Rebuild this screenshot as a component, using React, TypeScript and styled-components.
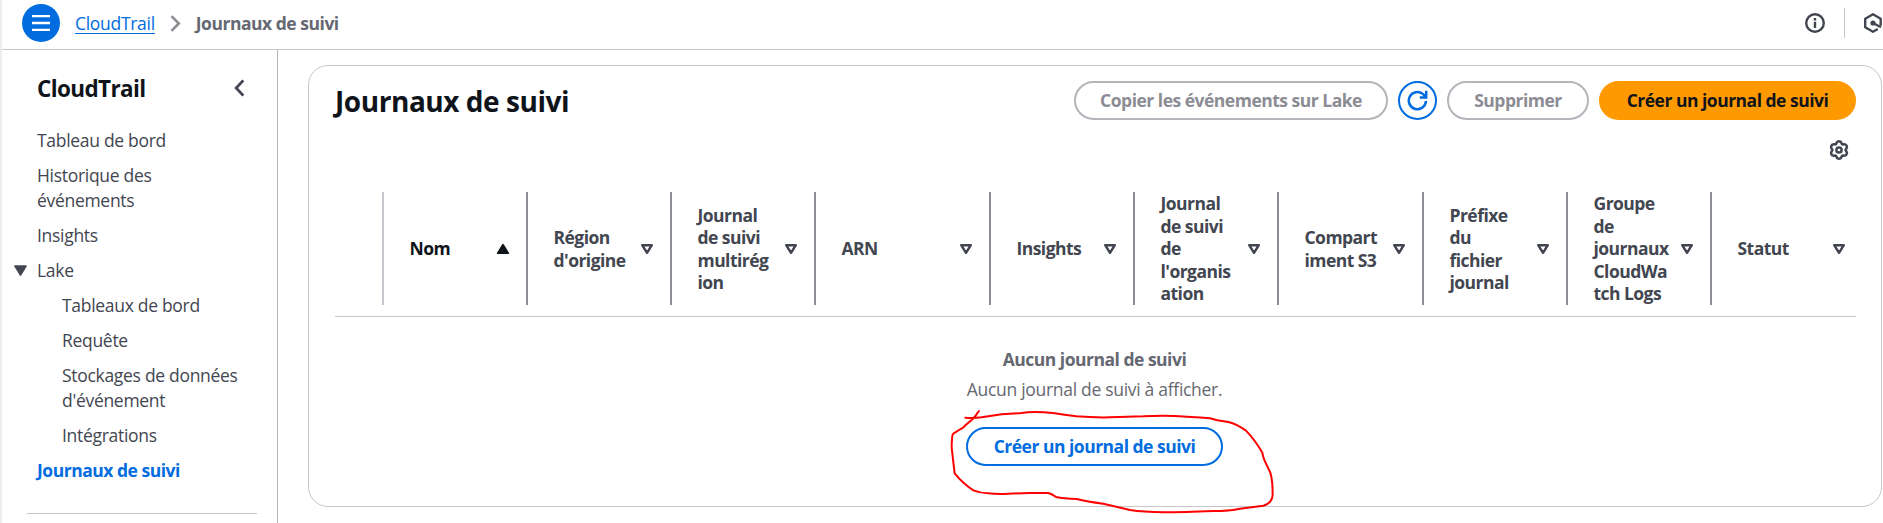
import React from 'react';
import styled, { createGlobalStyle } from 'styled-components';

const GlobalStyle = createGlobalStyle`
  *, *::before, *::after { box-sizing: border-box; }
  body {
    margin: 0;
    background: #fff;
    overflow: hidden;
    color: #424650;
    font: 400 17.5px/25px "Open Sans", "Noto Sans", sans-serif;
    letter-spacing: -0.3px;
  }
`;

const Page = styled.div`
  position: relative;
  display: flex;
  flex-direction: column;
  height: 523px;
  border-left: 2px solid #ebebf0;
  overflow: hidden;
`;

const TopBar = styled.header`
  flex: none;
  display: flex;
  align-items: center;
  justify-content: space-between;
  height: 50px;
  padding: 0 0 3px 20px;
  border-bottom: 1px solid #c6c6cd;
`;

const Breadcrumbs = styled.nav`
  display: flex;
  align-items: center;
`;

const MenuButton = styled.button`
  display: grid;
  place-items: center;
  width: 38px;
  height: 38px;
  margin-right: 15px;
  padding: 0;
  border: 0;
  border-radius: 50%;
  background: #006ce0;
`;

const CrumbLink = styled.a`
  height: 21px;
  line-height: 20px;
  border-bottom: 1px solid #006ce0;
  color: #006ce0;
`;

const CrumbArrow = styled.svg`
  margin: 0 15px;
`;

const CrumbCurrent = styled.span`
  color: #656871;
  font-weight: 700;
  letter-spacing: -0.48px;
`;

const Tools = styled.div`
  display: flex;
  align-items: center;
  width: 78px;
  height: 30px;
`;

const ToolDivider = styled.span`
  flex: none;
  width: 1px;
  height: 30px;
  margin: 0 19px;
  background: #c6c6cd;
`;

const Icon = styled.svg`
  display: block;
  flex: none;
`;

const Body = styled.div`
  flex: 1;
  display: flex;
  min-height: 0;
`;

const Sidebar = styled.aside`
  flex: none;
  width: 276px;
  border-right: 1px solid #b4b4bb;
  padding: 25px 20px 0 25px;
`;

const SideHeader = styled.div`
  display: flex;
  align-items: center;
  justify-content: space-between;
  height: 26px;
  padding: 0 12px 0 10px;
`;

const SideTitle = styled.h2`
  margin: 0;
  color: #0f141a;
  font-size: 22.5px;
  font-weight: 700;
  letter-spacing: -0.62px;
`;

const NavList = styled.ul<{ $nested?: boolean }>`
  display: flex;
  flex-direction: column;
  gap: 10px;
  margin: ${(p) => (p.$nested ? '10px 0 0 25px' : '27px 0 0 10px')};
  padding: 0;
  list-style: none;
`;

const NavItem = styled.li<{ $active?: boolean }>`
  white-space: pre-line;
  ${(p) => p.$active && 'color: #006ce0; font-weight: 700; letter-spacing: -0.48px;'}
`;

const NavGroup = styled.div`
  display: flex;
  align-items: center;
  gap: 10px;
  margin-left: -23px;
`;

const SideRule = styled.hr`
  height: 1px;
  margin: 30px 0 0;
  border: 0;
  background: #c6c6cd;
`;

const Main = styled.main`
  flex: 1;
  min-width: 0;
  padding: 15px 1px 16px 30px;
`;

const Panel = styled.section`
  height: 442px;
  padding: 15px 25px 0 26px;
  border: 1px solid #c6c6cd;
  border-radius: 20px;
`;

const PanelHeader = styled.div`
  display: flex;
  align-items: center;
  justify-content: space-between;
  height: 39px;
`;

const PanelTitle = styled.h1`
  margin: 0;
  color: #0f141a;
  font-size: 28px;
  font-weight: 700;
  line-height: 36px;
  letter-spacing: -0.45px;
`;

const Actions = styled.div`
  display: flex;
  gap: 10px;
`;

const tones = {
  normal: 'color: #006ce0; border-color: #006ce0; background: #fff;',
  disabled: 'color: #8c8c94; border-color: #b4b4bb; background: #fff;',
  primary: 'color: #0f141a; border-color: #ff9900; background: #ff9900;',
};

const Button = styled.button<{ $tone: keyof typeof tones; $width: number }>`
  display: flex;
  align-items: center;
  justify-content: center;
  width: ${(p) => p.$width}px;
  height: 39px;
  padding: 0;
  border: 2px solid;
  border-radius: 20px;
  font: inherit;
  font-weight: 700;
  letter-spacing: -0.5px;
  white-space: nowrap;
  ${(p) => tones[p.$tone]}
`;

const Preferences = styled.div`
  display: flex;
  justify-content: flex-end;
  height: 39px;
  margin-top: 10px;
  padding: 10px 7px 0 0;
`;

const HeaderRow = styled.div`
  display: flex;
  height: 148px;
  padding: 23px 0 11px 47px;
  border-bottom: 1px solid #c6c6cd;
`;

const HeaderCell = styled.div<{ $width: number; $sorted?: boolean; $first?: boolean; $last?: boolean }>`
  flex: ${(p) => (p.$last ? '1 1 0' : `0 0 ${p.$width}px`)};
  display: flex;
  align-items: center;
  justify-content: space-between;
  padding: 0 ${(p) => (p.$last ? 10 : 16)}px 0 25.5px;
  border-left: 2px solid ${(p) => (p.$first ? '#c6c6cd' : '#8c8c94')};
  color: ${(p) => (p.$sorted ? '#0f141a' : '#424650')};
  font-weight: 700;
  line-height: 22.5px;
  letter-spacing: -0.54px;
  white-space: pre;
`;

const Empty = styled.div`
  display: flex;
  flex-direction: column;
  align-items: center;
  margin-left: -2px;
  padding-top: 30px;
  color: #656871;
  line-height: 25px;
`;

const EmptyTitle = styled.strong`
  letter-spacing: -0.5px;
`;

const EmptyText = styled.p`
  margin: 5px 0 25px;
`;

const Scribble = styled.svg`
  position: absolute;
  left: 928px;
  top: 330px;
  pointer-events: none;
`;

const columns = [
  { label: 'Nom', width: 144, sorted: true },
  { label: "Région\nd'origine", width: 144 },
  { label: 'Journal\nde suivi\nmultirég\nion', width: 144 },
  { label: 'ARN', width: 175 },
  { label: 'Insights', width: 144 },
  { label: "Journal\nde suivi\nde\nl'organis\nation", width: 144 },
  { label: 'Compart\niment S3', width: 145 },
  { label: 'Préfixe\ndu\nfichier\njournal', width: 144 },
  { label: 'Groupe\nde\njournaux\nCloudWa\ntch Logs', width: 144 },
  { label: 'Statut', width: 145 },
];

const SortMark = ({ sorted }: { sorted?: boolean }) => (
  <Icon width="14" height="12" viewBox="0 0 14 12">
    {sorted ? (
      <path d="M7 1.8 12.2 10.2H1.800Z" fill="#0f141a" stroke="#0f141a" strokeWidth="1.8" strokeLinejoin="round" />
    ) : (
      <path d="M2.2 2.2h9.600L7 9.800Z" fill="none" stroke="#424650" strokeWidth="2.500" strokeLinejoin="round" />
    )}
  </Icon>
);

// Gear outline: a circle with six soft teeth, one pointing straight up.
const gearPoints = Array.from({ length: 72 }, (_, i) => {
  const a = (i * Math.PI) / 36;
  const r = 7.8 + 1.05 * Math.cos(6 * a) - 0.2 * Math.cos(12 * a);
  return `${(10 + r * Math.sin(a)).toFixed(2)},${(10 - r * Math.cos(a)).toFixed(2)}`;
}).join(' ');

export default function App() {
  return (
    <Page>
      <GlobalStyle />
      <TopBar>
        <Breadcrumbs>
          <MenuButton aria-label="Menu">
            <Icon width="18" height="16" viewBox="0 0 18 16">
              <path d="M0 1.2h18M0 8h18M0 14.8h18" stroke="#fff" strokeWidth="2.3" />
            </Icon>
          </MenuButton>
          <CrumbLink>CloudTrail</CrumbLink>
          <CrumbArrow width="11" height="17" viewBox="0 0 11 17">
            <path d="M1.5 1.2 8.8 8.5 1.5 15.8" fill="none" stroke="#8c8c94" strokeWidth="2.6" />
          </CrumbArrow>
          <CrumbCurrent>Journaux de suivi</CrumbCurrent>
        </Breadcrumbs>
        <Tools>
          <Icon width="20" height="20" viewBox="0 0 20 20">
            <circle cx="10" cy="10" r="8.8" fill="none" stroke="#424650" strokeWidth="2.4" />
            <path d="M8.8 5h2.4v2.4H8.800zM8.800 8.800h2.400V15H8.800z" fill="#424650" />
          </Icon>
          <ToolDivider />
          <Icon width="19" height="20" viewBox="0.5 0 19 20">
            <path d="M17.200 12.800V5.700L9.500 1.300 1.700 5.700v8.600l7.800 4.400 4.800-2.700" fill="none" stroke="#424650" strokeWidth="2.400" strokeLinejoin="round" />
            <circle cx="9.500" cy="10" r="2.600" fill="#424650" />
            <path d="m9.500 10 8 4.200" stroke="#424650" strokeWidth="2.400" />
          </Icon>
        </Tools>
      </TopBar>
      <Body>
        <Sidebar>
          <SideHeader>
            <SideTitle>CloudTrail</SideTitle>
            <Icon width="11" height="18" viewBox="0 0 11 18">
              <path d="M9.3 1.4 2.2 9l7.1 7.6" fill="none" stroke="#424650" strokeWidth="2.8" />
            </Icon>
          </SideHeader>
          <NavList>
            <NavItem>Tableau de bord</NavItem>
            <NavItem>{'Historique des\névénements'}</NavItem>
            <NavItem>Insights</NavItem>
            <NavItem>
              <NavGroup>
                <Icon width="13" height="11" viewBox="0 0 13 11">
                  <path d="M1 1h11L6.500 10Z" fill="#424650" stroke="#424650" strokeWidth="1.6" strokeLinejoin="round" />
                </Icon>
                <span>Lake</span>
              </NavGroup>
              <NavList $nested>
                <NavItem>Tableaux de bord</NavItem>
                <NavItem>Requête</NavItem>
                <NavItem>{"Stockages de données\nd'événement"}</NavItem>
                <NavItem>Intégrations</NavItem>
              </NavList>
            </NavItem>
            <NavItem $active>Journaux de suivi</NavItem>
          </NavList>
          <SideRule />
        </Sidebar>
        <Main>
          <Panel>
            <PanelHeader>
              <PanelTitle>Journaux de suivi</PanelTitle>
              <Actions>
                <Button $tone="disabled" $width={314}>Copier les événements sur Lake</Button>
                <Button $tone="normal" $width={39} aria-label="Actualiser">
                  <Icon width="21" height="21" viewBox="0 0 21 21">
                    <path d="M19 11a8.600 8.600 0 1 1-3.200-7.100l2.800 2.600" fill="none" stroke="#006ce0" strokeWidth="2.500" />
                    <path d="M19.200 .8v6.600h-6.400" fill="none" stroke="#006ce0" strokeWidth="2.500" />
                  </Icon>
                </Button>
                <Button $tone="disabled" $width={142}>Supprimer</Button>
                <Button $tone="primary" $width={257}>Créer un journal de suivi</Button>
              </Actions>
            </PanelHeader>
            <Preferences>
              <Icon width="20" height="20" viewBox="0 0 20 20" fill="none" stroke="#424650" strokeWidth="2.5" strokeLinejoin="round">
                <polygon points={gearPoints} />
                <circle cx="10" cy="10" r="2.600" />
              </Icon>
            </Preferences>
            <HeaderRow>
              {columns.map((c, i) => (
                <HeaderCell key={c.label} $width={c.width} $sorted={c.sorted} $first={i === 0} $last={i === columns.length - 1}>
                  <span>{c.label}</span>
                  <SortMark sorted={c.sorted} />
                </HeaderCell>
              ))}
            </HeaderRow>
            <Empty>
              <EmptyTitle>Aucun journal de suivi</EmptyTitle>
              <EmptyText>Aucun journal de suivi à afficher.</EmptyText>
              <Button $tone="normal" $width={257}>Créer un journal de suivi</Button>
            </Empty>
          </Panel>
        </Main>
      </Body>
      <Scribble width="380" height="193" viewBox="0 0 1140 579" fill="none" stroke="#fe0000" strokeWidth="6" strokeLinecap="round" strokeLinejoin="round">
        <path d="M147 243C137 256 133 264 125 270L106 286Q100 294 92 297L70 311Q66 315 66 330Q64 345 66 362L74 430Q98 460 130 481Q150 489 175 490Q205 493 235 491L300 489L355 489Q366 492 378 501Q400 506 440 507Q470 515 520 521L600 540Q640 546 700 547Q760 547 850 543Q900 543 930 536L1000 527Q1026 520 1028 495Q1028 450 1021 428L1003 390Q999 380 997 368Q975 330 948 302Q920 282 895 276L862 271L840 265Q780 260 735 258Q690 256 640 259L540 262Q490 263 440 259Q400 254 375 250Q310 242 275 249L215 253L155 262Q130 265 106 263" />
      </Scribble>
    </Page>
  );
}
